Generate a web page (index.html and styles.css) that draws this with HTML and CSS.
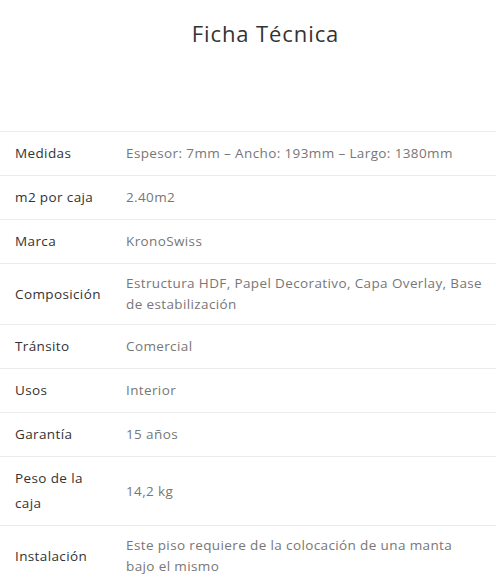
FILE: index.html
```html
<!DOCTYPE html>
<html lang="es">
<head>
<meta charset="utf-8">
<title>Ficha Técnica</title>
<link rel="stylesheet" href="styles.css">
</head>
<body>
<section class="spec">
  <h2 class="spec-title">Ficha Técnica</h2>
  <table class="spec-table">
    <tbody>
      <tr><th>Medidas</th><td>Espesor: 7mm – Ancho: 193mm – Largo: 1380mm</td></tr>
      <tr><th>m2 por caja</th><td>2.40m2</td></tr>
      <tr><th>Marca</th><td>KronoSwiss</td></tr>
      <tr><th>Composición</th><td>Estructura HDF, Papel Decorativo, Capa Overlay, Base de estabilización</td></tr>
      <tr><th>Tránsito</th><td>Comercial</td></tr>
      <tr><th>Usos</th><td>Interior</td></tr>
      <tr><th>Garantía</th><td>15 años</td></tr>
      <tr><th>Peso de la caja</th><td>14,2 kg</td></tr>
      <tr><th>Instalación</th><td>Este piso requiere de la colocación de una manta bajo el mismo</td></tr>
    </tbody>
  </table>
</section>
</body>
</html>
```
FILE: styles.css
```css
html, body {
  margin: 0;
  padding: 0;
  background: #ffffff;
}
body {
  font-family: "Open Sans", "Liberation Sans", sans-serif;
  color: #333333;
  width: 496px;
  overflow: hidden;
}
.spec-title {
  margin: 0;
  padding: 18px 0 0 35px;
  height: 112px;
  box-sizing: border-box;
  text-align: center;
  font-size: 22px;
  font-weight: 400;
  letter-spacing: 0.9px;
  line-height: 30px;
  color: #333333;
}
.spec-table {
  width: 496px;
  table-layout: fixed;
  border-collapse: collapse;
  border-top: 1px solid #ebebeb;
  margin-top: 19px;
}
.spec-table th,
.spec-table td {
  border-bottom: 1px solid #ebebeb;
  padding: 9px 12px 9px 0;
  vertical-align: middle;
  text-align: left;
  font-size: 13.5px;
  letter-spacing: 0.38px;
}
.spec-table th {
  width: 90px;
  padding-left: 15px;
  padding-right: 21px;
  font-weight: 400;
  color: #333333;
  line-height: 25px;
}
.spec-table td {
  padding-left: 0;
  color: #777777;
  line-height: 21px;
}
```
